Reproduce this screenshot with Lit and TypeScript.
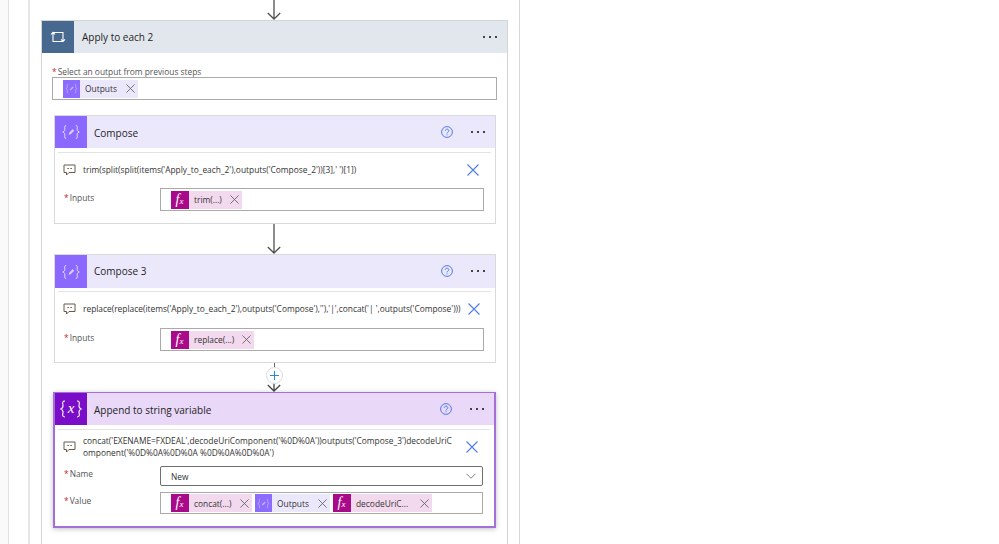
import { LitElement, html, css, svg } from "lit";
import { customElement } from "lit/decorators.js";

const X = (s = 9) => html`<svg class="x" width=${s} height=${s} viewBox="0 0 10 10"><path d="M.5.5l9 9M9.5.5l-9 9" fill="none" stroke="currentColor" stroke-width="1"/></svg>`;

const composeIcon = (s: number, o = 0.9) => html`<svg width=${s} height=${s} viewBox="0 0 32 32" fill="none" stroke="#fff" stroke-width="1.2" opacity=${o}>
  <path d="M9 6.500c-3 0-2 3-2 5s0 3.500-3 4.500c3 1 3 2.500 3 4.500s-1 5 2 5M23 6.500c3 0 2 3 2 5s0 3.500 3 4.500c-3 1-3 2.500-3 4.500s1 5-2 5"/>
  <path d="M12.500 20l.8-3 5.200-5.200 2.200 2.200-5.200 5.200z" fill="#fff" fill-opacity=".75" stroke="none"/></svg>`;

const fxIcon = svg`<text x="8.500" y="13" text-anchor="middle" font-family="Liberation Serif, serif" font-style="italic" fill="#fff"><tspan font-size="14">f</tspan><tspan font-size="9">x</tspan></text>`;

const chipFx = (t: string, w: number) => html`<span class="chip fx" style="width:${w}px"><span class="sq">
  <svg width="18" height="18" viewBox="0 0 18 18">${fxIcon}</svg></span><span class="lbl">${t}</span>${X()}</span>`;
const chipVar = () => html`<span class="chip var"><span class="sq">${composeIcon(15, 0.65)}</span><span class="lbl">Outputs</span>${X()}</span>`;

const comment = html`<svg class="cm" width="13" height="12" viewBox="0 0 13 12" fill="none"><path d="M1 1h11v7.500H6L3.500 11V8.500H1z" stroke="#6b5a48"/><path d="M4.500 4.500h1.200M7.500 4.500h1.200" stroke="#333"/></svg>`;
const help = html`<svg width="12" height="12" viewBox="0 0 12 12" fill="none" stroke="#4f7de8"><circle cx="6" cy="6" r="5.400"/><path d="M4.300 4.800c0-2.200 3.500-2.200 3.500 0 0 1.300-1.800 1.200-1.800 2.600M6 8.300v1"/></svg>`;
const blueX = html`<svg class="bx" width="12" height="12" viewBox="0 0 12 12"><path d="M.5.500l11 11M11.500.500l-11 11" stroke="#4f7de8" fill="none" stroke-width="1.100"/></svg>`;
const dots = html`<span class="dots"><i></i><i></i><i></i></span>`;
const arrow = (h: number, c = "#505050") => html`<svg class="arrow" width="14" height=${h} viewBox="0 0 14 ${h}" fill="none" stroke=${c} stroke-width="1.300"><path d="M7 0v${h - 1}M.8 ${h - 7}L7 ${h - 1}l6.200-6"/></svg>`;

@customElement("app-root")
export class AppRoot extends LitElement {
  static styles = css`
    :host { display: block; width: 999px; height: 544px; overflow: hidden; background: #fff; font-family: "Open Sans", "Noto Sans", sans-serif; color: #252423; }
    * { box-sizing: border-box; }
    .page { display: flex; height: 544px; }
    .strip { width: 8px; background: #fafafa; flex: none; }
    .canvas { width: 512px; flex: none; border-left: 1px solid #e3e3e3; border-right: 1px solid #d6d6d6; display: flex; }
    .rail { width: 19px; flex: none; }
    .inner { flex: 1; border-left: 2px solid #e6e6e6; padding-left: 11px; display: flex; flex-direction: column; align-items: flex-start; }
    .topArrow { width: 467px; height: 20px; flex: none; display: flex; justify-content: center; padding-right: 2px; }
    .loop { width: 467px; flex: 1; border: 1px solid #d4d4d4; border-bottom: 0; }
    .head { display: flex; align-items: center; height: 32px; flex: none; font-size: 10px; }
    .loop > .head { background: #e2e7ee; }
    .sq32 { width: 32px; height: 100%; display: flex; align-items: center; justify-content: center; flex: none; margin-right: 7px; }
    .loop > .head .sq32 { background: #47688f; margin-right: 8px; }
    .title { flex: 1; line-height: 10px; margin-top: -1px; }
    .card.a .title, .card.sel .title { margin-top: 1px; }
    .dots { display: flex; gap: 4px; width: 15px; margin-right: 9px; margin-top: -1px; }
    .dots i { width: 2px; height: 2px; background: #444; display: block; }
    .loopbody { padding: 14px 10px 0 10px; }
    .lab { font-size: 8.400px; color: #555; line-height: 10px; height: 10px; white-space: nowrap; }
    .star { color: #c4262e; margin-right: 1px; }
    .field { border: 1px solid #aaa; background: #fff; display: flex; align-items: center; gap: 3px; }
    .outfield { width: 445px; height: 23px; padding-left: 10px; }
    .chip { display: inline-flex; align-items: center; height: 18px; font-size: 8.400px; color: #333; white-space: nowrap; }
    .chip .sq { width: 18px; height: 18px; display: flex; align-items: center; justify-content: center; flex: none; }
    .chip .lbl { flex: 1; padding-left: 5px; }
    .chip .x { color: #666; margin-right: 3px; flex: none; }
    .var { background: #ece8fc; width: 75px; }
    .var .sq { width: 17px; background: #8c6cff; }
    .fx { background: #f3d9ee; }
    .fx .sq { background: #a90a8a; }
    .stack { display: flex; flex-direction: column; align-items: stretch; width: 442px; margin: 15px 0 0 2px; }
    .card { border: 1px solid #dadada; background: #fff; display: flex; flex-direction: column; flex: none; }
    .card > .head { background: #ece8fc; }
    .card .sq32 { background: #8b68ff; }
    .card .helpi { margin-right: 18px; display: flex; margin-top: -1px; }
    .rule { height: 1px; background: #e3e3e3; margin: 4px 4px 0 3px; flex: none; }
    .cmrow { display: flex; align-items: center; font-size: 8.400px; color: #333; padding: 0 16px 0 8px; height: 34px; flex: none; gap: 7px; }
    .cmrow .txt { flex: 1; line-height: 12px; white-space: nowrap; }
    .cm { flex: none; }
    .bx { flex: none; }
    .row { display: flex; align-items: center; padding: 0 11px 0 9px; flex: none; }
    .row .lab { width: 96px; flex: none; margin-bottom: 4px; }
    .infield { flex: 1; height: 23px; padding-left: 10px; }
    .card.a { height: 109px; }
    .card.a .row { margin-top: 1px; }
    .card.b { height: 109px; }
    .card.b > .head { height: 33px; }
    .card.b .rule { margin-top: 3px; }
    .card.b .row { margin-top: 2px; }
    .between { height: 30px; flex: none; display: flex; justify-content: center; padding-right: 2px; }
    .plusgap { height: 29px; flex: none; position: relative; }
    .stub { position: absolute; top: 0; left: 50%; margin-left: -1.500px; width: 1px; height: 4px; background: #666; }
    .plus { position: absolute; top: 4px; left: 50%; margin-left: -9.500px; width: 17px; height: 17px; border-radius: 50%; border: 1px solid #ddd; background: #fff; display: flex; align-items: center; justify-content: center; }
    .plusgap .arrow { position: absolute; bottom: 0; left: 50%; margin-left: -8px; }
    .card.sel { border: 2px solid #a56fd8; border-top-width: 1px; height: 136px; box-shadow: 0 1px 5px rgba(0,0,0,.25); width: 443px; margin-left: -1px; }
    .card.sel > .head { background: #e9d8f8; }
    .card.sel .sq32 { background: #7a0dc8; margin-right: 7px; }
    .card.sel .rule { margin-top: 4px; }
    .card.sel .cmrow { margin-bottom: 2px; padding-left: 8px; }
    .dd { flex: 1; height: 20px; border: 1px solid #6f6f6f; border-radius: 2px; font-size: 8.400px; display: flex; align-items: center; justify-content: space-between; padding: 0 6px 0 10px; color: #333; }
    .gap3 { height: 6px; flex: none; }
    .sel .infield { height: 22px; }
  `;

  render() {
    return html`<div class="page">
      <div class="strip"></div>
      <div class="canvas">
        <div class="rail"></div>
        <div class="inner">
          <div class="topArrow">${arrow(20)}</div>
          <div class="loop">
            <div class="head">
              <div class="sq32"><svg width="16" height="12" viewBox="0 0 16 12" fill="none" stroke="#fff" stroke-width="1.100"><path d="M1 3.500l2-2.200 2 2.200M3 1.300V10.500h10M15 8.300l-2 2.200-2-2.200M13 10.500V1.500H3"/></svg></div>
              <div class="title">Apply to each 2</div>${dots}
            </div>
            <div class="loopbody">
              <div class="lab"><span class="star">*</span>Select an output from previous steps</div>
              <div class="field outfield">${chipVar()}</div>
              <div class="stack">
                <div class="card a">
                  <div class="head"><div class="sq32">${composeIcon(22)}</div><div class="title">Compose</div><span class="helpi">${help}</span>${dots}</div>
                  <div class="rule"></div>
                  <div class="cmrow">${comment}<span class="txt">trim(split(split(items('Apply_to_each_2'),outputs('Compose_2'))[3],' ')[1])</span>${blueX}</div>
                  <div class="row"><span class="lab"><span class="star">*</span>Inputs</span><div class="field infield">${chipFx("trim(...)", 71)}</div></div>
                </div>
                <div class="between">${arrow(30)}</div>
                <div class="card b">
                  <div class="head"><div class="sq32">${composeIcon(22)}</div><div class="title">Compose 3</div><span class="helpi">${help}</span>${dots}</div>
                  <div class="rule"></div>
                  <div class="cmrow">${comment}<span class="txt">replace(replace(items('Apply_to_each_2'),outputs('Compose'),''),'|',concat('| ',outputs('Compose')))</span>${blueX}</div>
                  <div class="row"><span class="lab"><span class="star">*</span>Inputs</span><div class="field infield">${chipFx("replace(...)", 83)}</div></div>
                </div>
                <div class="plusgap"><span class="stub"></span>${arrow(9, "#444")}<span class="plus"><svg width="9" height="9" viewBox="0 0 9 9"><path d="M4.500 0v9M0 4.500h9" stroke="#2b88d8"/></svg></span></div>
                <div class="card sel">
                  <div class="head"><div class="sq32"><svg width="24" height="18" viewBox="0 0 24 18" fill="none" stroke="#fff" stroke-width="1.100"><path d="M6 1C2.500 1 4 4 4 6c0 2-.5 2.500-2.500 3C3.500 9.500 4 10 4 12c0 2-1.500 5 2 5M18 1c3.500 0 2 3 2 5 0 2 .5 2.500 2.500 3-2 .5-2.500 1-2.500 3 0 2 1.500 5-2 5"/><text x="12" y="13" text-anchor="middle" font-family="Liberation Serif, serif" font-style="italic" font-size="15" fill="#fff" stroke="none">x</text></svg></div><div class="title">Append to string variable</div><span class="helpi">${help}</span>${dots}</div>
                  <div class="rule"></div>
                  <div class="cmrow">${comment}<span class="txt">concat('EXENAME=FXDEAL',decodeUriComponent('%0D%0A'))outputs('Compose_3')decodeUriC<br>omponent('%0D%0A%0D%0A %0D%0A%0D%0A')</span>${blueX}</div>
                  <div class="row"><span class="lab"><span class="star">*</span>Name</span><div class="dd"><span>New</span><svg width="10" height="6" viewBox="0 0 11 6" fill="none" stroke="#777"><path d="M.5.500l5 5 5-5"/></svg></div></div>
                  <div class="gap3"></div>
                  <div class="row"><span class="lab"><span class="star">*</span>Value</span><div class="field infield">${chipFx("concat(...)", 81)}${chipVar()}${chipFx("decodeUriC...", 99)}</div></div>
                </div>
              </div>
            </div>
          </div>
        </div>
      </div>
    </div>`;
  }
}
